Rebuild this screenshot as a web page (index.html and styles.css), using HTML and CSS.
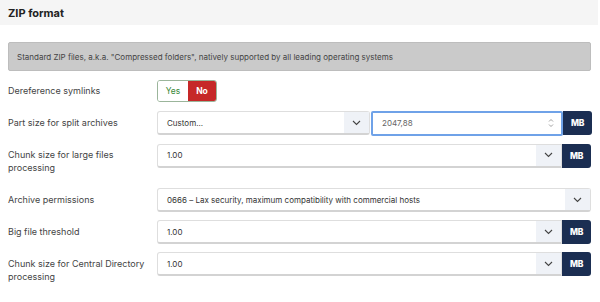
FILE: index.html
```html
<!DOCTYPE html>
<html>
<head>
<meta charset="utf-8">
<link rel="stylesheet" href="styles.css">
</head>
<body>
<div class="card">
  <div class="card-header">ZIP format</div>
  <div class="card-body">
    <div class="alert">Standard ZIP files, a.k.a. "Compressed folders", natively supported by all leading operating systems</div>

    <div class="row">
      <label class="label">Dereference symlinks</label>
      <div class="control">
        <div class="toggle">
          <span class="toggle-yes">Yes</span>
          <span class="toggle-no">No</span>
        </div>
      </div>
    </div>

    <div class="row">
      <label class="label">Part size for split archives</label>
      <div class="control group">
        <div class="select half">
          <span class="value">Custom...</span>
          <span class="arrow"><svg width="9" height="6" viewBox="0 0 9 6"><path d="M1 1l3.5 3.5L8 1" fill="none" stroke="#444" stroke-width="1.1"/></svg></span>
        </div>
        <div class="number">
          <span class="num-value">2047,88</span>
          <span class="spin"><svg width="6" height="10" viewBox="0 0 6 10"><path d="M1 3.5l2-2 2 2M1 6.5l2 2 2-2" fill="none" stroke="#888" stroke-width="0.8"/></svg></span>
        </div>
        <span class="unit">MB</span>
      </div>
    </div>

    <div class="row">
      <label class="label">Chunk size for large files processing</label>
      <div class="control group">
        <div class="select grow">
          <span class="value">1.00</span>
          <span class="arrow"><svg width="9" height="6" viewBox="0 0 9 6"><path d="M1 1l3.5 3.5L8 1" fill="none" stroke="#444" stroke-width="1.1"/></svg></span>
        </div>
        <span class="unit">MB</span>
      </div>
    </div>

    <div class="row">
      <label class="label">Archive permissions</label>
      <div class="control group">
        <div class="select grow full">
          <span class="value">0666 – Lax security, maximum compatibility with commercial hosts</span>
          <span class="arrow"><svg width="9" height="6" viewBox="0 0 9 6"><path d="M1 1l3.5 3.5L8 1" fill="none" stroke="#444" stroke-width="1.1"/></svg></span>
        </div>
      </div>
    </div>

    <div class="row">
      <label class="label">Big file threshold</label>
      <div class="control group">
        <div class="select grow">
          <span class="value">1.00</span>
          <span class="arrow"><svg width="9" height="6" viewBox="0 0 9 6"><path d="M1 1l3.5 3.5L8 1" fill="none" stroke="#444" stroke-width="1.1"/></svg></span>
        </div>
        <span class="unit">MB</span>
      </div>
    </div>

    <div class="row">
      <label class="label">Chunk size for Central Directory processing</label>
      <div class="control group">
        <div class="select grow">
          <span class="value">1.00</span>
          <span class="arrow"><svg width="9" height="6" viewBox="0 0 9 6"><path d="M1 1l3.5 3.5L8 1" fill="none" stroke="#444" stroke-width="1.1"/></svg></span>
        </div>
        <span class="unit">MB</span>
      </div>
    </div>
  </div>
</div>
</body>
</html>
```
FILE: styles.css
```css
* { box-sizing: border-box; }
html, body { margin: 0; padding: 0; background: #fff; }
body {
  font-family: Inter, "Noto Sans", sans-serif;
  font-size: 8.5px;
  color: #333;
  width: 600px;
  height: 302px;
  overflow: hidden;
}
.card { width: 598px; }
.card-header {
  height: 25px;
  background: #f5f5f5;
  padding: 0 8px;
  display: flex;
  align-items: center;
  font-weight: 700;
  font-size: 11px;
  color: #222;
}
.card-body { padding: 17px 7px 0 8px; }
.alert {
  height: 29px;
  background: #cacaca;
  border: 1px solid #bdbdbd;
  border-radius: 2px;
  display: flex;
  align-items: center;
  padding: 0 8px;
  color: #444;
  font-size: 8px;
  margin-bottom: 8px;
}
.row {
  display: flex;
  align-items: flex-start;
  margin-bottom: 8px;
}
.label {
  width: 149px;
  flex: none;
  padding: 5.6px 6px 5.6px 0;
  line-height: 12.8px;
  font-size: 9px;
  color: #444;
}
.control { flex: 1; min-height: 24px; display: flex; align-items: center; }
.toggle {
  display: flex;
  height: 22px;
  border: 1px solid #9bb59b;
  border-radius: 3px;
  overflow: hidden;
}
.toggle-yes {
  width: 30px;
  display: flex; align-items: center; justify-content: center;
  color: #3a8a3a;
  background: #fff;
}
.toggle-no {
  width: 28px;
  display: flex; align-items: center; justify-content: center;
  color: #fff;
  font-weight: 700;
  background: #c62828;
}
.group { display: flex; align-items: stretch; }
.select {
  height: 24px;
  display: flex;
  align-items: stretch;
  border: 1px solid #dedede;
  border-bottom: 2px solid #d3d3d3;
  border-radius: 3px;
  background: #fff;
}
.select.half { width: 213px; }
.select.grow { flex: 1; border-top-right-radius: 0; border-bottom-right-radius: 0; }
.select.full { border-radius: 3px; }
.value {
  flex: 1;
  padding-left: 9px;
  display: flex;
  align-items: center;
  color: #333;
  font-size: 8px;
  white-space: nowrap;
}
.arrow {
  width: 25px;
  background: #eff2f7;
  display: flex;
  align-items: center;
  justify-content: center;
}
.number {
  width: 192px;
  margin-left: 1px;
  height: 25px;
  border: 2px solid #6fa2e8;
  border-radius: 2px;
  display: flex;
  align-items: center;
  padding: 0 7px 0 9px;
  margin-top: -0.5px;
  font-size: 8px;
}
.num-value { flex: 1; color: #666; }
.spin { display: flex; align-items: center; }
.unit {
  width: 29px;
  height: 24px;
  background: #1b2e52;
  color: #fff;
  font-weight: 800;
  font-size: 8.5px;
  display: flex;
  align-items: center;
  justify-content: center;
  border-radius: 0 3px 3px 0;
  letter-spacing: -0.3px;
}
```
